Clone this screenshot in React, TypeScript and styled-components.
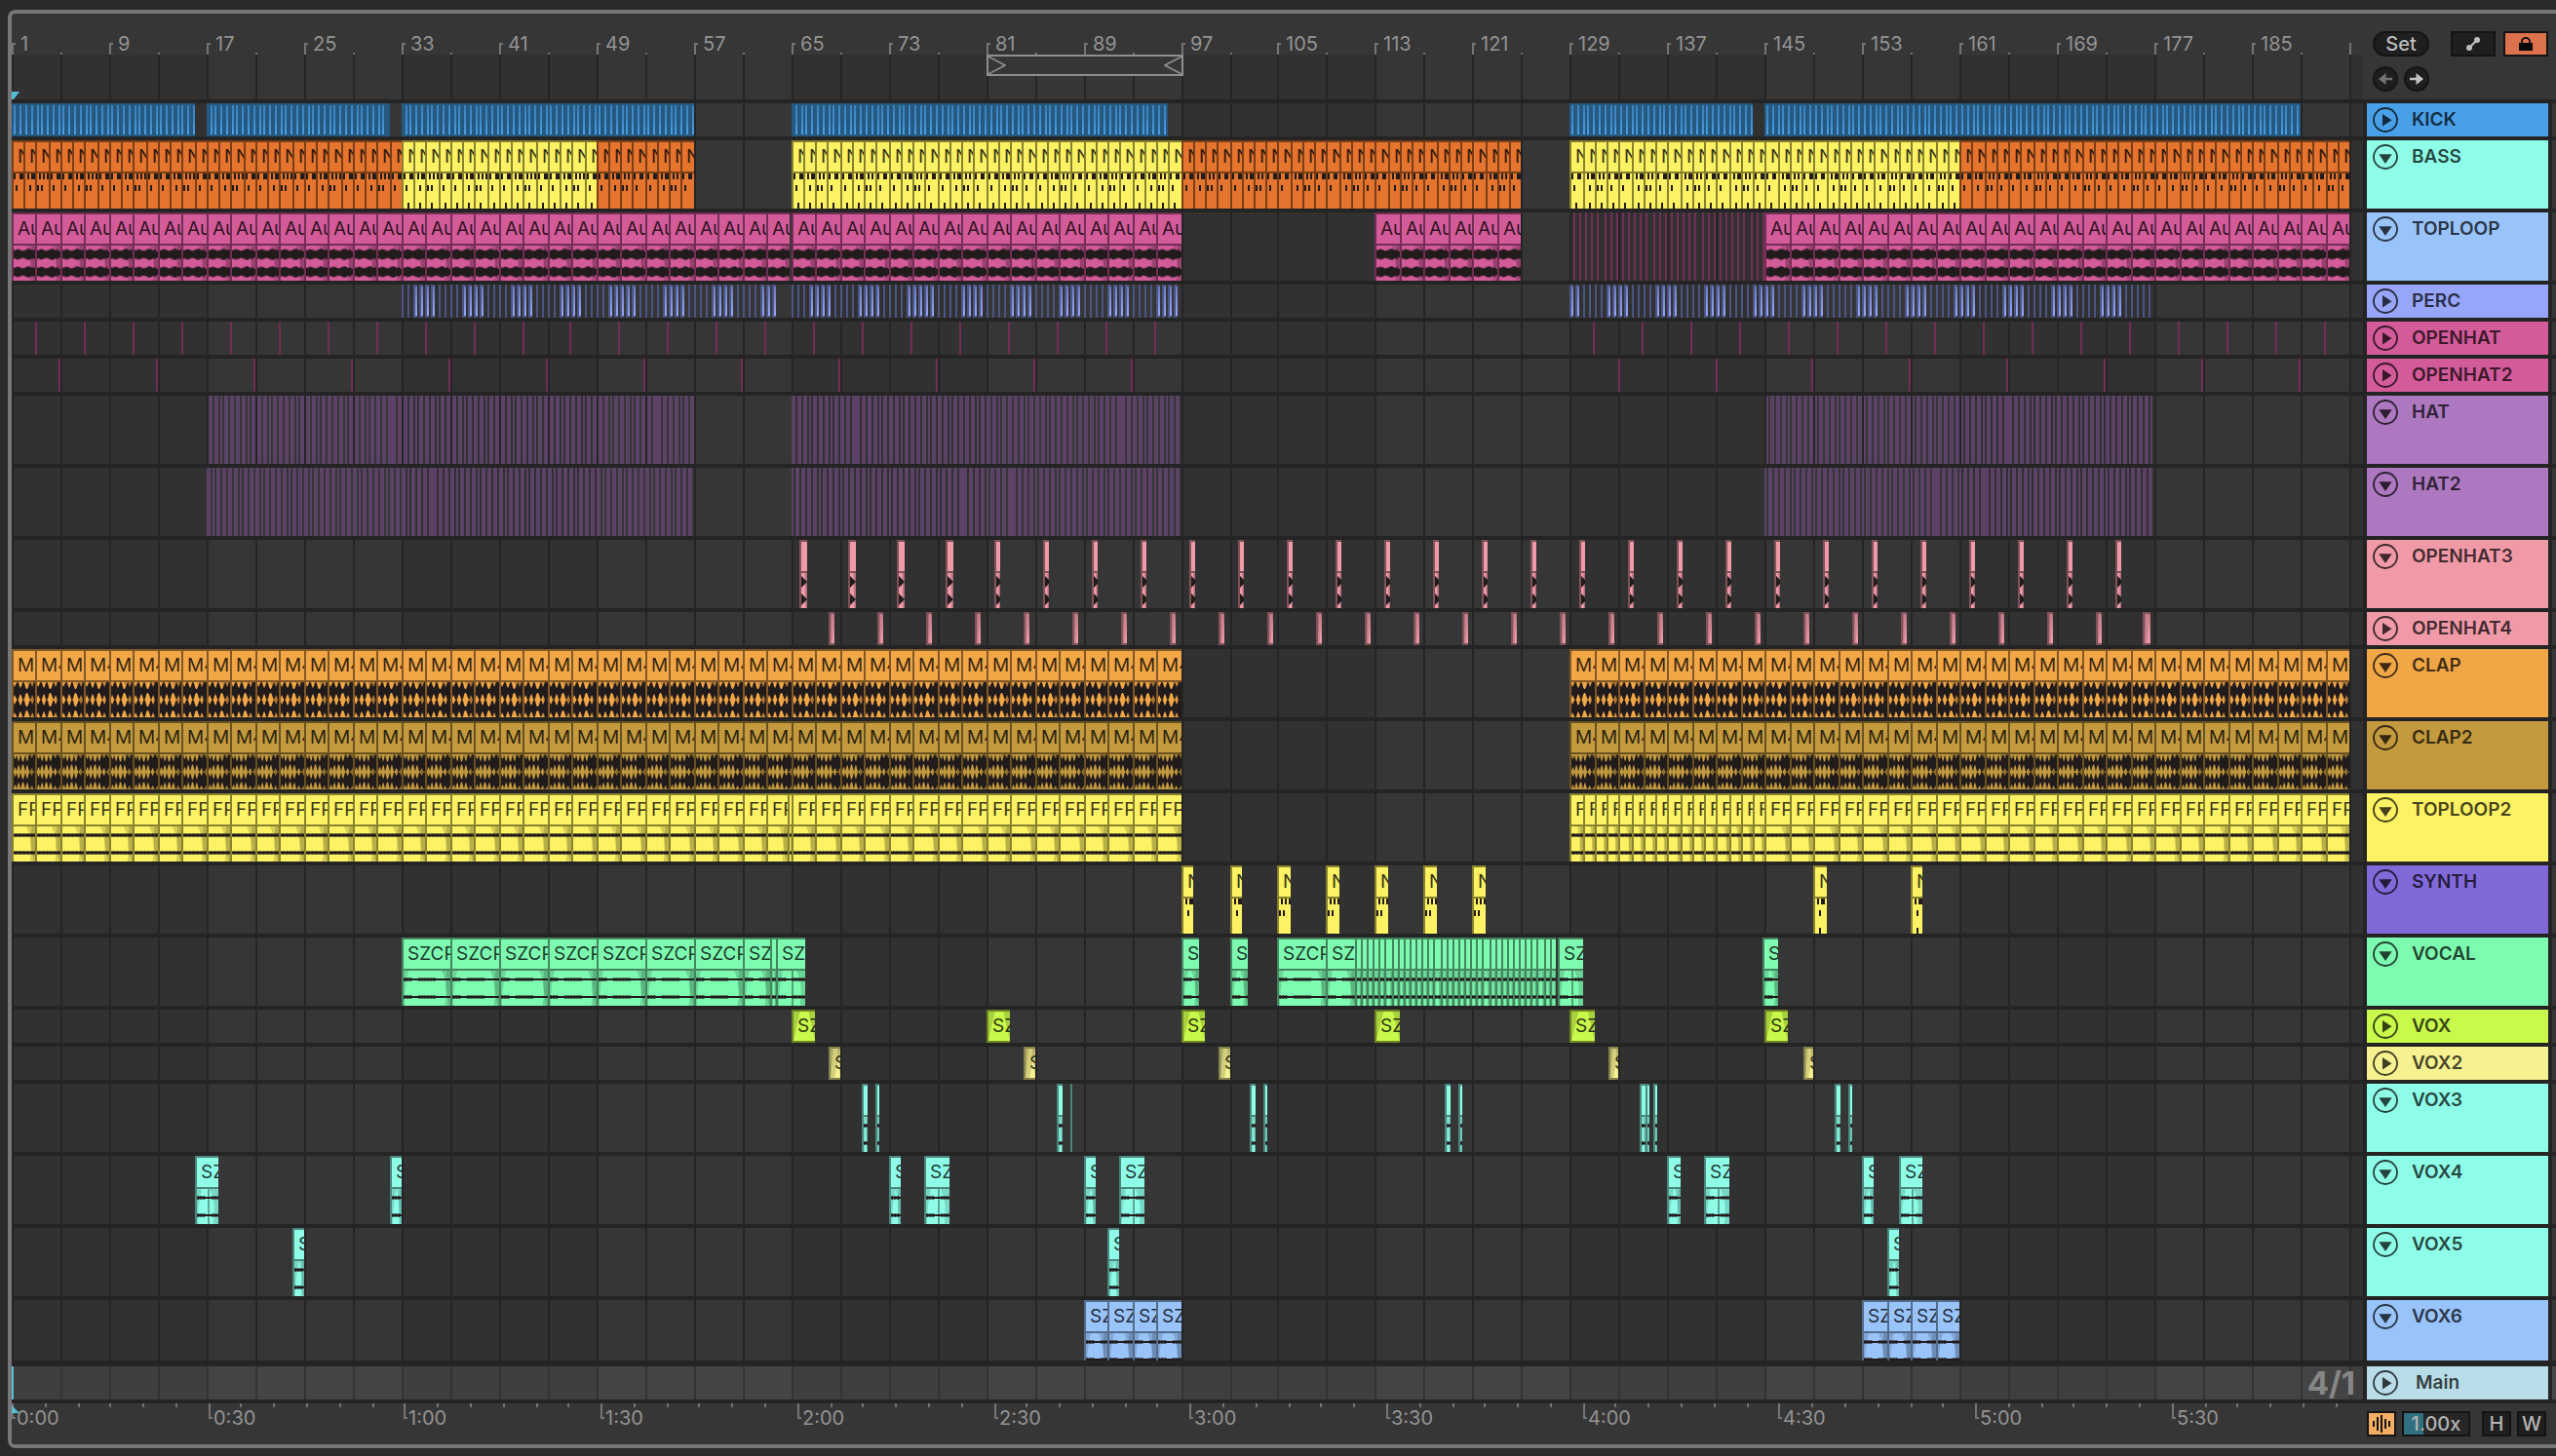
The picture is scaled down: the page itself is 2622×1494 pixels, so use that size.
import React from "react";
import styled, { createGlobalStyle } from "styled-components";

/* ---------- timeline scale ---------- */

const PX_PER_BAR = 12.49;
const PX_PER_SECOND = 6.714;
const snap = (px: number) => 2 * Math.round(px / 2);
const X = (bar: number) => snap(bar * PX_PER_BAR);

const range = (from: number, to: number, step: number) => {
  const out: number[] = [];
  for (let v = from; v < to - 0.001; v += step) out.push(v);
  return out;
};

/* ---------- palette ---------- */

const c = {
  page: "#2a2a2a",
  panel: "#363636",
  laneDark: "#313131",
  line: "#242424",
  frame: "#777777",
  tick: "#747474",
  label: "#939393",
  cyan: "#56bdd3",
};

const FONT = 'Inter, "Liberation Sans", sans-serif';

const Global = createGlobalStyle`
  body { margin: 0; background: ${c.page}; font-family: ${FONT}; }
  button, input { font-family: inherit; padding: 0; margin: 0; box-sizing: border-box; }
`;

/* ---------- data ---------- */

type WaveKind = "loop" | "clap" | "clap2" | "flat" | "vocal" | "hit" | "midi" | "midi3";
type ClipData = {
  at: number;
  len: number;
  name?: string;
  color?: string;
  edge?: string;
  wave?: WaveKind;
  step?: number;
  split?: boolean;
};
type Strip = { from: number; to: number; pitch: number; phase: number; width: number };
type Track = {
  name: string;
  color: string;
  height: number;
  folded?: boolean;
  edge?: string;
  clips?: ClipData[];
  strips?: Strip[];
  stripKind?: "kick" | "perc" | "plain";
  gap?: number;
};

const repeat = (from: number, to: number, step: number, extra: Partial<ClipData>): ClipData[] =>
  range(from, to, step).map((at, i) => ({ at, len: Math.min(step, to - at), step: i, ...extra }));

const at = (starts: number[], len: number, extra: Partial<ClipData>): ClipData[] =>
  starts.map((s, i) => ({ at: s, len, step: i, ...extra }));

const orange = { name: "N", color: "#e5742e", edge: "#7c3e17", wave: "midi" as WaveKind };
const yellow = { name: "N", color: "#fdf263", edge: "#88822f", wave: "midi3" as WaveKind };
const loop = { name: "Audio", color: "#d45b9a", wave: "loop" as WaveKind };
const clap = { name: "M4", wave: "clap" as WaveKind };
const clap2 = { name: "M4", wave: "clap2" as WaveKind };
const flat = { name: "FP", wave: "flat" as WaveKind };
const vocal = { name: "SZCP", wave: "vocal" as WaveKind };
const pair = { ...vocal, split: true };
const bare = { wave: "vocal" as WaveKind };
const hit = { wave: "hit" as WaveKind };

const NINTH = (PX_PER_BAR * 4) / 9;
const HALF = PX_PER_BAR / 2;

const tracks: Track[] = [
  {
    name: "KICK", color: "#4aa0e8", edge: "#25597f", height: 34, folded: true, stripKind: "kick",
    strips: [
      { from: 0, to: 15, pitch: NINTH, phase: 2.9, width: 2 },
      { from: 16, to: 31, pitch: NINTH, phase: 3.4, width: 2 },
      { from: 32, to: 56, pitch: NINTH, phase: 3.4, width: 2 },
      { from: 64, to: 95, pitch: NINTH, phase: 4.4, width: 2 },
      { from: 128, to: 143, pitch: NINTH, phase: 1.5, width: 2 },
      { from: 144, to: 188, pitch: NINTH, phase: 1.5, width: 2 },
    ],
  },
  {
    name: "BASS", color: "#8efee9", height: 70,
    clips: [
      ...repeat(0, 32, 1, orange), ...repeat(32, 48, 1, yellow), ...repeat(48, 56, 1, orange),
      ...repeat(64, 96, 1, yellow), ...repeat(96, 124, 1, orange),
      ...repeat(128, 160, 1, yellow), ...repeat(160, 192, 1, orange),
    ],
  },
  {
    name: "TOPLOOP", color: "#99c3fb", edge: "#732e55", height: 70, stripKind: "plain",
    strips: [{ from: 128, to: 143.9, pitch: HALF, phase: 3.2, width: 2 }],
    clips: [
      ...repeat(0, 63.9, 2, loop), ...repeat(64, 96, 2, loop),
      ...repeat(112, 124, 2, loop), ...repeat(144, 192, 2, loop),
    ],
  },
  {
    name: "PERC", color: "#97a6f9", edge: "#4b5583", height: 34, folded: true, stripKind: "perc",
    strips: [
      { from: 32, to: 62.8, pitch: HALF, phase: 0, width: 3 },
      { from: 64, to: 96, pitch: HALF, phase: 0, width: 3 },
      { from: 128, to: 175.9, pitch: HALF, phase: 0, width: 3 },
    ],
  },
  {
    name: "OPENHAT", color: "#d45b9a", edge: "#732e55", height: 34, folded: true, stripKind: "plain",
    strips: [
      { from: 2, to: 95, pitch: PX_PER_BAR * 4, phase: -1.55, width: 2 },
      { from: 130, to: 192, pitch: PX_PER_BAR * 4, phase: -1.55, width: 2 },
    ],
  },
  {
    name: "OPENHAT2", color: "#d45b9a", edge: "#732e55", height: 34, folded: true, stripKind: "plain",
    strips: [
      { from: 4, to: 96, pitch: PX_PER_BAR * 8, phase: -1.55, width: 2 },
      { from: 132, to: 192, pitch: PX_PER_BAR * 8, phase: -1.55, width: 2 },
    ],
  },
  {
    name: "HAT", color: "#ad78c0", edge: "#5c4267", height: 70, stripKind: "plain",
    strips: [
      { from: 16, to: 56, pitch: NINTH, phase: 2.4, width: 3.6 },
      { from: 64, to: 96, pitch: NINTH, phase: 1, width: 3.6 },
      { from: 144, to: 176, pitch: NINTH, phase: 0.6, width: 3.6 },
    ],
  },
  {
    name: "HAT2", color: "#ad78c0", edge: "#5c4267", height: 70, stripKind: "plain",
    strips: [
      { from: 16, to: 56, pitch: NINTH, phase: 0, width: 3.6 },
      { from: 64, to: 96, pitch: NINTH, phase: 0, width: 3.6 },
      { from: 144, to: 175.8, pitch: NINTH, phase: -1.2, width: 3.6 },
    ],
  },
  { name: "OPENHAT3", color: "#f09aa8", edge: "#80525a", height: 70, clips: at(range(64.7, 173, 4), 0.563, hit) },
  { name: "OPENHAT4", color: "#f09aa8", edge: "#80525a", height: 34, folded: true, clips: at(range(67.1, 176, 4), 0.5, {}) },
  { name: "CLAP", color: "#f2a747", edge: "#825826", height: 70, clips: [...repeat(0, 96, 2, clap), ...repeat(128, 192, 2, clap)] },
  { name: "CLAP2", color: "#c39a3e", edge: "#6a5220", height: 70, clips: [...repeat(0, 96, 2, clap2), ...repeat(128, 192, 2, clap2)] },
  {
    name: "TOPLOOP2", color: "#fdf263", edge: "#88822f", height: 70,
    clips: [
      ...repeat(0, 63.7, 2, flat), ...at([63.7], 0.3, { wave: "flat" }), ...repeat(64, 96, 2, flat),
      ...repeat(128, 144, 1, flat), ...repeat(144, 192, 2, flat),
    ],
  },
  {
    name: "SYNTH", color: "#8269da", height: 70,
    clips: [
      ...at([96, 100, 104, 108, 112, 116, 120], 1, { ...yellow, wave: "midi" }),
      ...at([148, 156], 1, yellow),
    ].map((k) => ({ ...k, step: (k.step ?? 0) < 2 ? 1 : 2 })),
  },
  {
    name: "VOCAL", color: "#7dfbb1", edge: "#44855f", height: 70,
    clips: [
      ...repeat(32, 60, 4, vocal), ...at([60], 2.3, vocal), ...at([62.3], 0.5, bare), ...at([62.8], 2.4, pair),
      ...at([96, 100], 1.45, vocal), ...at([104], 4, vocal), ...at([108], 2.3, vocal),
      ...repeat(110.3, 126.8, 0.5, bare), ...at([127], 2.05, pair), ...at([143.8], 1.25, vocal),
    ],
  },
  { name: "VOX", color: "#c8f94b", edge: "#6c8423", height: 34, folded: true, clips: at([64, 80, 96, 112, 128, 144], 1.95, { name: "SZ" }) },
  {
    name: "VOX2", color: "#f7f291", edge: "#85824d", height: 34, folded: true,
    clips: [...at([67.05, 83.05, 99.05], 1, { name: "SZ" }), ...at([131.2, 147.2], 0.8, { name: "SZ" })],
  },
  {
    name: "VOX3", color: "#8efee9", edge: "#4b877c", height: 70,
    clips: [
      ...at([69.8, 85.8, 101.7, 117.7, 133.7, 149.7], 0.54, bare), ...at([134.2], 0.35, bare),
      ...at([70.95, 102.85, 118.85, 134.85, 150.85], 0.32, bare), ...at([86.95], 0.16, bare),
    ],
  },
  {
    name: "VOX4", color: "#8efee9", edge: "#4b877c", height: 70,
    clips: [
      ...at([15.05], 1.9, pair),
      ...at([74.95, 90.95, 138.95, 154.95], 2.05, pair),
      ...at([31.1, 72.05, 88.05, 152], 0.95, vocal),
      ...at([136], 1.05, vocal),
    ],
  },
  { name: "VOX5", color: "#8efee9", edge: "#4b877c", height: 70, clips: at([23.05, 90, 154], 0.98, vocal) },
  { name: "VOX6", color: "#99c3fb", edge: "#526c8b", height: 62, gap: 6, clips: [...repeat(88, 96, 2, vocal), ...repeat(152, 160, 2, vocal)] },
];

/* ---------- frame ---------- */

const Page = styled.div`
  box-sizing: border-box;
  min-height: 100vh;
  padding: 10px 0 8px 8px;
  background: ${c.page};
`;

const Panel = styled.main`
  display: flex;
  border: 4px solid ${c.frame};
  border-right: 0;
  border-radius: 8px 0 0 8px;
  background: ${c.panel};
  overflow: hidden;
`;

const Timeline = styled.section`
  position: relative;
  flex: 1;
  min-width: 0;
  overflow: hidden;
`;

const GridLayer = styled.div`
  position: absolute;
  inset: 42px 0 0 0;
  background: ${c.panel};
`;

const GridBlock = styled.div`
  position: absolute;
  top: 0;
  bottom: 0;
  background: ${c.laneDark};
`;

const GridLine = styled.div`
  position: absolute;
  top: 0;
  bottom: 0;
  width: 2px;
  background: ${c.line};
`;

const Lane = styled.div<{ $h: number; $gap: number; $main?: boolean }>`
  position: relative;
  height: ${(p) => p.$h}px;
  border-bottom: ${(p) => p.$gap}px solid ${c.line};
  background: ${(p) => (p.$main ? "rgba(255, 255, 255, 0.07)" : "transparent")};
  background-clip: padding-box;
  overflow: hidden;
`;

const Playhead = styled.div`
  position: absolute;
  left: 0;
  top: 0;
  bottom: 0;
  width: 2px;
  background: ${c.cyan};
`;

const Signature = styled.div`
  position: absolute;
  right: 8px;
  top: 0;
  font-size: 33px;
  line-height: 34px;
  font-weight: 700;
  color: #868686;
`;

/* ---------- rulers ---------- */

const BarRuler = styled.div`
  position: relative;
  height: 88px;
  border-bottom: 4px solid ${c.line};
`;

const TimeRuler = styled.div`
  position: relative;
  height: 42px;
  background: ${c.panel};
`;

const Tick = styled.span<{ $top: number; $h: number }>`
  position: absolute;
  top: ${(p) => p.$top}px;
  width: 2px;
  height: ${(p) => p.$h}px;
  background: ${c.tick};
`;

const Foot = styled.span<{ $top: number }>`
  position: absolute;
  top: ${(p) => p.$top}px;
  width: 4px;
  height: 2px;
  background: ${c.tick};
`;

const BarLabel = styled.span`
  position: absolute;
  top: 21px;
  padding-left: 9px;
  font-size: 20px;
  line-height: 20px;
  color: ${c.label};
`;

const TimeLabel = styled.span`
  position: absolute;
  top: 5px;
  padding-left: 5px;
  font-size: 20px;
  line-height: 20px;
  color: ${c.label};
`;

const LoopBrace = styled.div`
  position: absolute;
  top: 42px;
  box-sizing: border-box;
  height: 22px;
  border: 2px solid #8e8e8e;
  background: ${c.panel};
  display: flex;
  justify-content: space-between;
`;

const Marker = styled.svg<{ $top: number }>`
  position: absolute;
  left: 0;
  top: ${(p) => p.$top}px;
`;

/* ---------- clips ---------- */

const ClipBox = styled.div<{ $color: string; $edge: string; $small?: boolean }>`
  position: absolute;
  top: 0;
  bottom: 0;
  box-sizing: border-box;
  border-left: 2px solid ${(p) => p.$edge};
  border-top: 2px solid ${(p) => p.$edge};
  border-bottom: ${(p) => (p.$small ? 2 : 0)}px solid ${(p) => p.$edge};
  background: ${(p) => p.$color};
  overflow: hidden;
`;

const ClipTitle = styled.div<{ $edge: string; $small?: boolean }>`
  position: relative;
  height: 30px;
  padding-left: 4px;
  border-bottom: ${(p) => (p.$small ? 0 : 2)}px solid ${(p) => p.$edge};
  font-size: 19px;
  line-height: 30px;
  white-space: nowrap;
  overflow: hidden;
  color: rgba(0, 0, 0, 0.8);
`;

const Body = styled.svg`
  display: block;
`;

const Sheen = styled.svg`
  position: absolute;
  left: 0;
  top: 0;
`;

const StripLayer = styled.svg`
  position: absolute;
  left: 0;
  top: 0;
  width: 100%;
  height: 100%;
`;

const INK = "#211b1c";

const envelope: Record<string, (x: number) => number> = {
  loop: (x) => [4, 5, 3.6, 6, 4.6, 6, 4, 5.6, 3.2, 4.4, 3, 5, 3.6, 6, 4.4, 6.4, 5, 6, 4, 5, 3.6, 5.4, 4, 3, 3][Math.floor(x) % 25],
  clap: (x) => [7, 4, 6, 8.6, 9, 8.6, 5, 3, 5, 8.6, 9, 8, 4, 2, 2, 4, 7, 9, 7, 4, 6, 9, 9, 9, 8.6][Math.floor(x) % 25],
  clap2: (x) => [8, 5, 4, 8.6, 5, 1.4, 4, 8.6, 5, 1.4, 1.4, 5, 8.6, 4, 1.4, 5, 8.6, 8.6, 6, 5, 8, 8.8, 8, 6, 5][Math.floor(x) % 25],
  flat: (x) => [1.2, 1.8, 1.5, 2][Math.floor(x) % 4],
  vocal: (x) => (x < 9 ? [1.3, 1.9, 1.5][Math.floor(x) % 3] : x > 14 && x < 34 ? [1.2, 1.8, 1.5][Math.floor(x) % 3] : 1),
  hit: (x) => Math.max(0, 6 - x),
};

const wavePath = (kind: string, w: number) => {
  const f = envelope[kind];
  return [9, 27]
    .map((mid) => {
      const xs = range(0, w + 1, 1);
      const up = xs.map((x) => `${x} ${(mid - f(x)).toFixed(1)}`);
      const down = xs.map((x) => `${x} ${(mid + f(x)).toFixed(1)}`).reverse();
      return `M${up.join("L")}L${down.join("L")}Z`;
    })
    .join("");
};

const HIGH = [[2, 8, 10], [4, 8, 10], [4, 8, 12], [2, 8, 10]];
const MID = [[4], [6], [2, 6], [4]];

function ClipBody({ kind, w, step, split }: { kind: WaveKind; w: number; step: number; split?: boolean }) {
  if (kind === "midi" || kind === "midi3") {
    const i = step % 4;
    return (
      <Body width={w} height={36} shapeRendering="crispEdges" fill={INK}>
        {HIGH[i].map((x) => <rect key={x} x={x - 2} y={0} width={2} height={6} />)}
        {MID[i].map((x) => <rect key={x} x={x - 2} y={12} width={2} height={6} />)}
        {kind === "midi3" && <rect x={4} y={30} width={2} height={6} />}
      </Body>
    );
  }
  const shade = "rgba(0,0,0,0.15)";
  const fade = Math.min(9, w / 2);
  return (
    <Body width={w} height={36}>
      <path d={`M${w - fade} 0Q${w - 2} 14 ${w - fade * 0.6} 36H${w}V0Z`} fill={shade} />
      {!split && <path d={`M${w - fade * 0.4} 0Q${w - fade * 0.7} 20 ${w - 1} 36H${w}V0Z`} fill={shade} />}
      {kind === "vocal" && <path d={`M0 0H${Math.min(5, w / 2)}Q1 16 1 36H0Z`} fill={shade} />}
      {split && <rect x={Math.round(w / 2)} y={0} width={2} height={36} fill="rgba(0,0,0,.35)" />}
      <path d={wavePath(kind, w)} fill={INK} />
    </Body>
  );
}

function Clip({ clip, track }: { clip: ClipData; track: Track }) {
  const left = X(clip.at);
  const width = Math.max(2, X(clip.at + clip.len) - left);
  const color = clip.color ?? track.color;
  const edge = clip.edge ?? track.edge ?? c.line;
  const inner = Math.max(1, width - 2);
  const small = !!track.folded;
  return (
    <ClipBox $color={color} $edge={edge} $small={small} style={{ left, width }}>
      {small && (
        <Sheen width={inner} height={30}>
          <path d={`M0 0H${inner * 0.3}L0 30Z`} fill="rgba(0,0,0,.16)" />
          <path d={`M${inner * 0.7} 0H${inner}V30Z`} fill="rgba(0,0,0,.16)" />
          {inner < 12 && <path d={`M0 0H${inner}L${inner * 0.4} 30H0Z`} fill="rgba(0,0,0,.14)" />}
        </Sheen>
      )}
      <ClipTitle $edge={edge} $small={small}>{clip.name}</ClipTitle>
      {!small && clip.wave && <ClipBody kind={clip.wave} w={inner} step={clip.step ?? 0} split={clip.split} />}
    </ClipBox>
  );
}

function Strips({ track }: { track: Track }) {
  const h = track.height;
  const kind = track.stripKind;
  return (
    <StripLayer shapeRendering="crispEdges">
      <defs>
        <linearGradient id="kick" x1="0" y1="0" x2="0" y2="1">
          <stop offset="0" stopColor="#3c83bf" />
          <stop offset="0.5" stopColor="#3f8aca" />
          <stop offset="1" stopColor="#4aa0e8" />
        </linearGradient>
        <linearGradient id="perc" x1="0" y1="0" x2="0" y2="1">
          <stop offset="0" stopColor="#6c7ac0" />
          <stop offset="1" stopColor="#97a6f9" />
        </linearGradient>
      </defs>
      {(track.strips ?? []).map((s) => {
        const start = s.from * PX_PER_BAR + s.phase;
        const end = s.to * PX_PER_BAR - 1;
        return (
          <g key={s.from}>
            {kind === "kick" && <rect x={X(s.from)} y={0} width={X(s.to) - X(s.from)} height={h} fill={track.edge} />}
            {range(start, end, s.pitch).map((p) => {
              const x = snap(p);
              const w = snap(p + s.width) - x || 2;
              if (kind === "kick") return <rect key={p} x={x} y={2} width={2} height={30} fill="url(#kick)" />;
              return (
                <g key={p}>
                  <rect x={x} y={0} width={s.width === 2 ? 2 : w} height={h} fill={track.edge} />
                  {kind === "perc" && w > 2 && <rect x={x + 2} y={2} width={2} height={h - 4} fill="url(#perc)" />}
                </g>
              );
            })}
          </g>
        );
      })}
    </StripLayer>
  );
}

/* ---------- header column ---------- */

const Side = styled.aside`
  display: flex;
  flex-direction: column;
  width: 198px;
  flex: none;
`;

const SideTop = styled.div`
  box-sizing: border-box;
  height: 92px;
  padding: 18px 8px 0 10px;
  border-bottom: 4px solid ${c.line};
`;

const ToolRow = styled.div<{ $gap: number }>`
  display: flex;
  gap: ${(p) => p.$gap}px;
  margin-bottom: 10px;
`;

const Pill = styled.button`
  width: 58px;
  height: 26px;
  margin-right: auto;
  border: 2px solid #141414;
  border-radius: 13px;
  background: #1f1f1f;
  color: #bdbdbd;
  font-size: 20px;
  line-height: 20px;
  font-weight: 500;
`;

const Tool = styled.button<{ $w: number; $bg?: string }>`
  display: flex;
  align-items: center;
  justify-content: center;
  width: ${(p) => p.$w}px;
  height: 26px;
  border: 2px solid #141414;
  background: ${(p) => p.$bg ?? "#1f1f1f"};
  color: #b4b4b4;
  font-size: 20px;
  line-height: 20px;
  font-weight: 500;
`;

const Round = styled.button`
  display: flex;
  align-items: center;
  justify-content: center;
  width: 26px;
  height: 26px;
  border: 2px solid #141414;
  border-radius: 50%;
  background: #1f1f1f;
`;

const HeaderRow = styled.div<{ $h: number; $gap: number }>`
  display: flex;
  gap: 4px;
  height: ${(p) => p.$h}px;
  padding-left: 4px;
  border-bottom: ${(p) => p.$gap}px solid ${c.line};
  background: ${c.line};
`;

const Header = styled.div<{ $color: string; $main?: boolean }>`
  display: flex;
  flex: 1;
  align-items: flex-start;
  gap: ${(p) => (p.$main ? 18 : 14)}px;
  padding: 4px 0 0 6px;
  background: ${(p) => p.$color};
  color: rgba(0, 0, 0, 0.74);
  font-size: 19px;
  line-height: 26px;
  font-weight: 600;
  overflow: hidden;
`;

const Stub = styled.div<{ $main?: boolean }>`
  width: 4px;
  background: ${(p) => (p.$main ? "#464646" : c.panel)};
`;

const Fold = styled.button`
  width: 26px;
  height: 26px;
  border: 0;
  background: none;
  color: inherit;

  svg { display: block; }
`;

const SideBottom = styled.div`
  display: flex;
  gap: 6px;
  padding: 8px 0 0 4px;
`;

const Rate = styled.input`
  width: 70px;
  height: 26px;
  margin-right: 6px;
  border: 2px solid #141414;
  border-radius: 0;
  background: linear-gradient(to right, #31707f 20px, #262626 20px);
  color: #b4b4b4;
  font-size: 20px;
  font-weight: 500;
  text-align: center;
`;

function FoldButton({ name, folded }: { name: string; folded?: boolean }) {
  return (
    <Fold type="button" aria-label={`${folded ? "Unfold" : "Fold"} ${name}`}>
      <svg width="26" height="26" viewBox="0 0 26 26">
        <circle cx="13" cy="13" r="12" fill="none" stroke="currentColor" strokeWidth="1.8" />
        <path d={folded ? "M10 7V19.5L19.5 13.2Z" : "M6.3 10.3H19.7L13 20Z"} fill="currentColor" />
      </svg>
    </Fold>
  );
}

const bars = range(0, 193, 4);
const seconds = range(0, 360, 5);
const clock = (s: number) => `${Math.floor(s / 60)}:${String(s % 60).padStart(2, "0")}`;

export default function App() {
  return (
    <>
      <Global />
      <Page>
        <Panel>
          <Timeline>
            <GridLayer>
              {range(0, 208, 32).map((b) => (
                <GridBlock key={b} style={{ left: X(b), width: X(16) }} />
              ))}
              {bars.map((b) => <GridLine key={b} style={{ left: X(b) }} />)}
            </GridLayer>

            <BarRuler>
              {bars.map((b) =>
                b % 8 ? (
                  <Tick key={b} $top={40} $h={2} style={{ left: X(b) }} />
                ) : (
                  <React.Fragment key={b}>
                    <Tick $top={30} $h={12} style={{ left: X(b) }} />
                    {b < 192 && <Foot $top={30} style={{ left: X(b) }} />}
                    {b < 192 && <BarLabel style={{ left: X(b) }}>{b + 1}</BarLabel>}
                  </React.Fragment>
                )
              )}
              <LoopBrace style={{ left: X(80), width: X(96) - X(80) + 2 }}>
                <svg width="18" height="18" viewBox="0 0 18 18">
                  <path d="M0 0L17 9L0 18" fill="none" stroke="#8e8e8e" strokeWidth="1.6" />
                </svg>
                <svg width="18" height="18" viewBox="0 0 18 18">
                  <path d="M18 0L1 9L18 18" fill="none" stroke="#8e8e8e" strokeWidth="1.6" />
                </svg>
              </LoopBrace>
              <Marker $top={80} width="8" height="8">
                <path d="M0 0H8L2 8H0Z" fill={c.cyan} />
              </Marker>
            </BarRuler>

            {tracks.map((t) => (
              <Lane key={t.name} $h={t.height} $gap={t.gap ?? 4}>
                {t.strips && <Strips track={t} />}
                {t.clips?.map((k) => <Clip key={k.at} clip={k} track={t} />)}
              </Lane>
            ))}
            <Lane $h={34} $gap={4} $main>
              <Playhead />
              <Signature>4/1</Signature>
            </Lane>

            <TimeRuler>
              {seconds.map((s) => {
                const left = snap(s * PX_PER_SECOND);
                return s % 30 ? (
                  <Tick key={s} $top={0} $h={4} style={{ left }} />
                ) : (
                  <React.Fragment key={s}>
                    <Tick $top={0} $h={16} style={{ left }} />
                    <Foot $top={14} style={{ left }} />
                    <TimeLabel style={{ left }}>{clock(s)}</TimeLabel>
                  </React.Fragment>
                );
              })}
              <Marker $top={2} width="8" height="8">
                <path d="M0 0L8 8H0Z" fill={c.cyan} />
              </Marker>
            </TimeRuler>
          </Timeline>

          <Side>
            <SideTop>
              <ToolRow $gap={8}>
                <Pill type="button">Set</Pill>
                <Tool type="button" $w={46} aria-label="Automation mode">
                  <svg width="16" height="16" viewBox="0 0 16 16">
                    <path d="M4 12L12 4" stroke="#bdbdbd" strokeWidth="2.2" />
                    <circle cx="4" cy="12" r="3" fill="#bdbdbd" />
                    <circle cx="12" cy="4" r="3" fill="#bdbdbd" />
                  </svg>
                </Tool>
                <Tool type="button" $w={46} $bg="#db714d" aria-label="Lock envelopes">
                  <svg width="14" height="14" viewBox="0 0 14 14">
                    <rect x="0" y="6" width="14" height="8" fill="#0a0a0a" />
                    <path d="M3 7V4.5A4 3.6 0 0 1 11 4.5V7" fill="none" stroke="#0a0a0a" strokeWidth="1.8" />
                  </svg>
                </Tool>
              </ToolRow>
              <ToolRow $gap={6}>
                <Round type="button" aria-label="Previous locator">
                  <svg width="14" height="12" viewBox="0 0 14 12">
                    <path d="M0 6L7.5 0V4.8H14V7.2H7.5V12Z" fill="#747474" />
                  </svg>
                </Round>
                <Round type="button" aria-label="Next locator">
                  <svg width="14" height="12" viewBox="0 0 14 12">
                    <path d="M14 6L6.5 0V4.8H0V7.2H6.5V12Z" fill="#c4c4c4" />
                  </svg>
                </Round>
              </ToolRow>
            </SideTop>

            {tracks.map((t) => (
              <HeaderRow key={t.name} $h={t.height} $gap={t.gap ?? 4}>
                <Header $color={t.color}>
                  <FoldButton name={t.name} folded={t.folded} />
                  <span>{t.name}</span>
                </Header>
                <Stub />
              </HeaderRow>
            ))}
            <HeaderRow $h={34} $gap={4}>
              <Header $color="#b9dde8" $main>
                <FoldButton name="Main" folded />
                <span>Main</span>
              </Header>
              <Stub $main />
            </HeaderRow>

            <SideBottom>
              <Tool type="button" $w={30} $bg="#f4ae63" aria-label="Show waveforms">
                <svg width="18" height="18" viewBox="0 0 18 18" fill="#141414" shapeRendering="crispEdges">
                  <rect x="0" y="6" width="2" height="6" />
                  <rect x="4" y="2" width="2" height="14" />
                  <rect x="8" y="0" width="2" height="18" />
                  <rect x="12" y="4" width="2" height="10" />
                  <rect x="16" y="6" width="2" height="6" />
                </svg>
              </Tool>
              <Rate aria-label="Zoom factor" defaultValue="1.00x" />
              <Tool type="button" $w={30}>H</Tool>
              <Tool type="button" $w={30}>W</Tool>
            </SideBottom>
          </Side>
        </Panel>
      </Page>
    </>
  );
}
